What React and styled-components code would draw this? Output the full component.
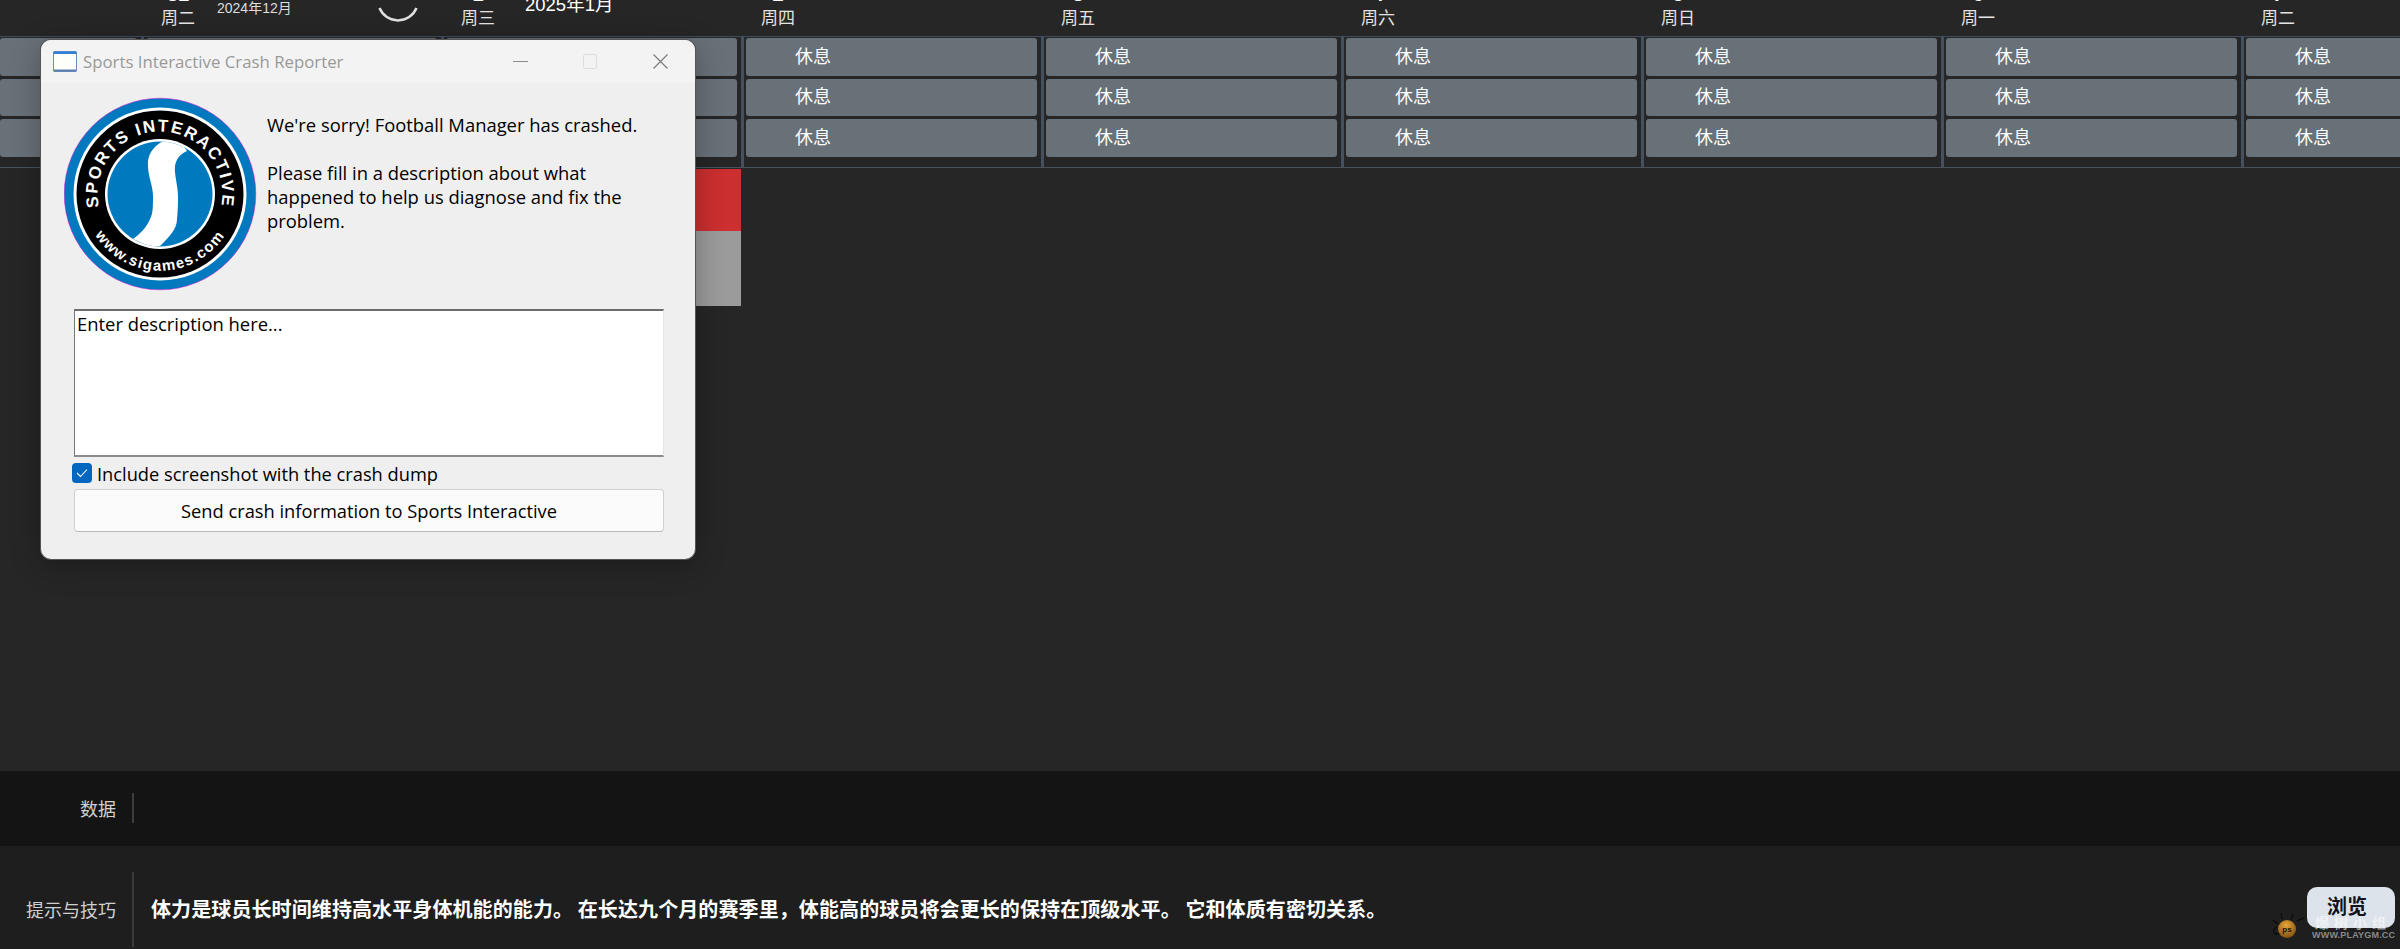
import React from 'react';
import styled, { createGlobalStyle } from 'styled-components';

const GlobalStyle = createGlobalStyle`
  html, body {
    margin: 0;
    padding: 0;
    background: #262626;
    overflow: hidden;
  }
`;

const cjk = `"Noto Sans CJK SC", "Noto Sans", sans-serif`;
const dialogFont = `"Open Sans", "Noto Sans", sans-serif`;

const Page = styled.div`
  position: relative;
  width: 2400px;
  height: 949px;
  display: flex;
  flex-direction: column;
  overflow: hidden;
  background: #262626;
  font-family: ${cjk};
`;

const Grid = styled.div`
  display: grid;
  grid-template-columns: 141px repeat(8, 300px);
`;

const Header = styled(Grid)`
  height: 36px;
  flex: none;
  overflow: hidden;
`;

const DayCell = styled.div`
  position: relative;
  height: 36px;
  display: flex;
  flex-direction: column;
  justify-content: flex-end;
  align-items: flex-start;
  padding: 0 0 9px 20px;
  box-sizing: border-box;
  color: #e4e4e4;
  font-size: 17px;
  line-height: 20px;
`;

const DayNumber = styled.span`
  flex: none;
  width: 34px;
  height: 22px;
  margin-bottom: 2px;
  text-align: center;
  font-size: 20px;
  font-weight: 700;
  line-height: 22px;
  color: #fff;
  font-family: "Liberation Sans", sans-serif;
`;

const MonthLabel = styled.span`
  position: absolute;
  top: ${p => p.$top}px;
  left: ${p => p.$left}px;
  font-size: ${p => p.$size}px;
  line-height: 1;
  color: ${p => p.$color};
  white-space: nowrap;
  font-family: "Liberation Sans", ${cjk};
`;

const Spinner = styled.svg`
  position: absolute;
  left: 235px;
  top: -22px;
`;

const Rows = styled(Grid)`
  height: 132px;
  flex: none;
  box-sizing: border-box;
  border-top: 1px solid #3f4c5c;
  border-bottom: 1px solid #4a535c;
`;

const RowColumn = styled.div`
  display: flex;
  flex-direction: column;
  gap: 3px;
  padding: 1px 4px 0 ${p => p.$first ? 0 : 2}px;
  border-left: ${p => p.$first ? 0 : 3}px solid #43505f;
`;

const RestCard = styled.div`
  height: 37.5px;
  padding: 0 0 4px 49px;
  box-sizing: border-box;
  display: flex;
  align-items: center;
  border-radius: 3px;
  background: #697178;
  color: #fff;
  font-size: 18px;
  line-height: 1;
`;

const Body = styled(Grid)`
  flex: 1;
  min-height: 0;
`;

const StatusColumn = styled.div`
  grid-column: 3;
  display: flex;
  flex-direction: column;
  padding-top: 1px;
`;

const StatusBar = styled.div`
  height: ${p => p.$height}px;
  background: ${p => p.$color};
`;

const DataBar = styled.div`
  height: 75px;
  flex: none;
  box-sizing: border-box;
  padding-bottom: 1px;
  display: flex;
  align-items: center;
  background: #141414;
`;

const TipBar = styled.div`
  height: 103px;
  flex: none;
  box-sizing: border-box;
  padding-top: 24px;
  display: flex;
  align-items: center;
  background: #1e1e1e;
`;

const FooterLabel = styled.div`
  width: 116px;
  flex: none;
  padding-bottom: ${p => p.$lift || 0}px;
  text-align: right;
  color: #d0d0d0;
  font-size: 18px;
`;

const FooterRule = styled.div`
  width: 2px;
  height: ${p => p.$height}px;
  margin: 0 17px 0 16px;
  background: #3c3c3c;
`;

const TipText = styled.div`
  padding-bottom: 3px;
  color: #fff;
  font-size: 20px;
  font-weight: 700;
  letter-spacing: 0.1px;
  white-space: nowrap;
`;

const BrowseButton = styled.button`
  position: absolute;
  right: 5px;
  bottom: 21px;
  width: 88px;
  height: 41px;
  border: 0;
  border-radius: 10px;
  background: #dde3ea;
  color: #10141c;
  font-family: ${cjk};
  font-size: 20px;
  font-weight: 700;
  padding: 0 8px 5px 0;
`;

const WatermarkText = styled.div`
  position: absolute;
  left: 2312px;
  top: 928px;
  color: #8a8a8a;
  font-family: "Liberation Sans", sans-serif;
  font-size: 9px;
  font-weight: 700;
  letter-spacing: 0.2px;
  line-height: 14px;
  white-space: nowrap;
`;

const WatermarkGlyphs = styled.div`
  position: absolute;
  left: 2315px;
  top: 913px;
  color: rgba(255, 255, 255, 0.55);
  font-size: 14px;
  line-height: 18px;
  letter-spacing: 5px;
  font-weight: 700;
  white-space: nowrap;
`;

const Ball = styled.svg`
  position: absolute;
  left: 2267px;
  top: 907px;
`;

/* crash dialog sits over the schedule */
const Dialog = styled.div`
  position: absolute;
  left: 41px;
  top: 40px;
  width: 654px;
  height: 519px;
  display: flex;
  flex-direction: column;
  border-radius: 10px;
  overflow: hidden;
  background: #efefef;
  box-shadow: 0 0 0 1px #555, 0 6px 30px rgba(0, 0, 0, 0.3);
  font-family: ${dialogFont};
  color: #000;
`;

const TitleBar = styled.div`
  height: 43px;
  flex: none;
  display: flex;
  align-items: center;
  padding-left: 12px;
  background: #f3f3f3;
`;

const WindowIcon = styled.svg`
  flex: none;
  margin-right: 6px;
`;

const TitleText = styled.div`
  flex: 1;
  color: #999;
  font-size: 16.8px;
  white-space: nowrap;
`;

const TitleButton = styled.svg`
  flex: none;
  margin-right: ${p => p.$gap}px;
`;

const DialogBody = styled.div`
  flex: 1;
  display: flex;
  flex-direction: column;
  padding: 14px 31px 0 23px;
`;

const Intro = styled.div`
  display: flex;
  gap: 9px;
  height: 212px;
`;

const Logo = styled.svg`
  flex: none;
`;

const Message = styled.div`
  padding-top: 16px;
  font-size: 18.4px;
  line-height: 24px;
  width: 390px;
`;

const MessageGap = styled.div`
  height: 24px;
`;

const DescriptionBox = styled.div`
  box-sizing: border-box;
  margin-left: 10px;
  width: 590px;
  height: 148px;
  padding: 1px 2px;
  background: #fff;
  border: 1px solid #e3e3e3;
  border-top: 2px solid #6c6c6c;
  border-left: 1px solid #777;
  border-bottom: 2px solid #8b8b8b;
  font-size: 18.4px;
  line-height: 24px;
`;

const CheckRow = styled.div`
  display: flex;
  align-items: center;
  gap: 5px;
  height: 20px;
  margin: 6px 0 0 8px;
  font-size: 18.25px;
`;

const CheckBox = styled.div`
  width: 20px;
  height: 20px;
  border-radius: 4px;
  background: #0067c0;
  display: flex;
  align-items: center;
  justify-content: center;
`;

const SendButton = styled.div`
  box-sizing: border-box;
  margin: 6px 0 0 10px;
  width: 590px;
  height: 43px;
  display: flex;
  align-items: center;
  justify-content: center;
  background: #fbfbfb;
  border: 1px solid #d0d0d0;
  border-bottom-color: #b8b8b8;
  border-radius: 4px;
  font-size: 18.3px;
`;

const days = [
  ['31', '周二'], ['1', '周三'], ['2', '周四'], ['3', '周五'],
  ['4', '周六'], ['5', '周日'], ['6', '周一'], ['7', '周二'],
];

const SILogo = () => (
  <Logo width="194" height="194" viewBox="-96 -97 194 194">
    <defs>
      <path id="topArc" d="M -62 7 A 62.4 62.4 0 1 1 62 7" />
      <path id="bottomArc" d="M -72 27 A 77 77 0 0 0 72 27" />
      <clipPath id="innerClip"><circle r="52.5" /></clipPath>
    </defs>
    <circle r="95.8" fill="#0079bf" stroke="#e010d8" strokeWidth="0.5" />
    <circle r="86.5" fill="#fff" />
    <circle r="83.5" fill="#000" />
    <circle r="55" fill="#fff" />
    <circle r="52.5" fill="#0079bf" />
    <path
      clipPath="url(#innerClip)"
      d="M 3 -53 C -8 -47 -13 -38 -12 -28 C -12 -18 -7 -8 -7 2 C -7 12 -7 20 -10 25 C -13 33 -20 40 -27 45 L -10 53 L 0 52 C 10 42 17 35 17 25 C 18 15 18 10 18 2 C 18 -8 14 -20 15 -28 C 16 -35 20 -40 27 -43 L 20 -53 Z"
      fill="#fff"
    />
    <text fontFamily="Liberation Sans, sans-serif" fontSize="17" fontWeight="700" fill="#fff" letterSpacing="1.9">
      <textPath href="#topArc" startOffset="50%" textAnchor="middle">SPORTS INTERACTIVE</textPath>
    </text>
    <text fontFamily="Liberation Sans, sans-serif" fontSize="15" fontWeight="700" fill="#fff" letterSpacing="1.4">
      <textPath href="#bottomArc" startOffset="50%" textAnchor="middle">www.sigames.com</textPath>
    </text>
  </Logo>
);

const App = () => (
  <Page>
    <GlobalStyle />
    <Header>
      <div />
      {days.map(([num, name], i) => (
        <DayCell key={i}>
          <DayNumber>{num}</DayNumber>
          {name}
          {i === 0 && <MonthLabel $left={76} $top={1} $size={14} $color="#ddd">2024年12月</MonthLabel>}
          {i === 0 && (
            <Spinner width="44" height="44" viewBox="0 0 44 44">
              <path d="M 3.5 30 A 20 20 0 0 0 40.5 30" fill="none" stroke="#e0e0e0" strokeWidth="2.5" />
            </Spinner>
          )}
          {i === 1 && <MonthLabel $left={84} $top={-4} $size={18.5} $color="#fff">2025年1月</MonthLabel>}
        </DayCell>
      ))}
    </Header>
    <Rows>
      <RowColumn $first>
        <RestCard />
        <RestCard />
        <RestCard />
      </RowColumn>
      {days.map((_, i) => (
        <RowColumn key={i}>
          <RestCard>休息</RestCard>
          <RestCard>休息</RestCard>
          <RestCard>休息</RestCard>
        </RowColumn>
      ))}
    </Rows>
    <Body>
      <div />
      <div />
      <StatusColumn>
        <StatusBar $height={62} $color="#cc2f2f" />
        <StatusBar $height={75} $color="#9b9b9b" />
      </StatusColumn>
    </Body>
    <DataBar>
      <FooterLabel>数据</FooterLabel>
      <FooterRule $height={30} />
    </DataBar>
    <TipBar>
      <FooterLabel $lift={2}>提示与技巧</FooterLabel>
      <FooterRule $height={75} />
      <TipText>体力是球员长时间维持高水平身体机能的能力。 在长达九个月的赛季里，体能高的球员将会更长的保持在顶级水平。 它和体质有密切关系。</TipText>
    </TipBar>
    <Ball width="40" height="40" viewBox="0 0 40 40">
      <defs>
        <radialGradient id="ballFill" cx="45%" cy="30%" r="75%">
          <stop offset="0%" stopColor="#e8a63a" />
          <stop offset="100%" stopColor="#7a4c0c" />
        </radialGradient>
      </defs>
      <g stroke="#0a0a0a" strokeWidth="1.1" fill="none">
        <path d="M 6 13 L 11 17 M 14 6 L 15 12 M 26 7 L 24 13 M 30 14 L 37 11 M 10 20 C 3 24 8 29 12 26" />
      </g>
      <circle cx="20" cy="22" r="9" fill="url(#ballFill)" />
      <text x="20" y="25" textAnchor="middle" fontSize="8" fontWeight="700" fontFamily="Liberation Sans, sans-serif" fill="#1a1206">ps</text>
    </Ball>
    <BrowseButton>浏览</BrowseButton>
    <WatermarkGlyphs>爆树小组</WatermarkGlyphs>
    <WatermarkText>WWW.PLAYGM.CC</WatermarkText>
    <Dialog>
      <TitleBar>
        <WindowIcon width="24" height="21" viewBox="0 0 24 21">
          <rect x="0.5" y="0.5" width="23" height="20" rx="1" fill="#fffffa" stroke="#6f8fb8" />
          <rect x="0.5" y="0.5" width="23" height="2.5" fill="#2f80d8" />
          <rect x="0.5" y="18.5" width="23" height="2" fill="#5a7fb0" />
        </WindowIcon>
        <TitleText>Sports Interactive Crash Reporter</TitleText>
        <TitleButton $gap={55} width="15" height="15" viewBox="0 0 15 15">
          <path d="M 0 7.5 H 15" stroke="#8a8a8a" strokeWidth="1" />
        </TitleButton>
        <TitleButton $gap={56} width="14" height="15" viewBox="0 0 14 15">
          <rect x="0.5" y="0.5" width="13" height="14" rx="2" fill="none" stroke="#dcdcdc" />
        </TitleButton>
        <TitleButton $gap={27} width="15" height="15" viewBox="0 0 15 15">
          <path d="M 0.5 0.5 L 14.5 14.5 M 14.5 0.5 L 0.5 14.5" stroke="#777" strokeWidth="1.1" />
        </TitleButton>
      </TitleBar>
      <DialogBody>
        <Intro>
          <SILogo />
          <Message>
            We're sorry! Football Manager has crashed.
            <MessageGap />
            Please fill in a description about what happened to help us diagnose and fix the problem.
          </Message>
        </Intro>
        <DescriptionBox>Enter description here...</DescriptionBox>
        <CheckRow>
          <CheckBox>
            <svg width="12" height="10" viewBox="0 0 12 10">
              <path d="M 1 5 L 4.5 8.5 L 11 1.5" fill="none" stroke="#fff" strokeWidth="1.1" />
            </svg>
          </CheckBox>
          Include screenshot with the crash dump
        </CheckRow>
        <SendButton>Send crash information to Sports Interactive</SendButton>
      </DialogBody>
    </Dialog>
  </Page>
);

export default App;
